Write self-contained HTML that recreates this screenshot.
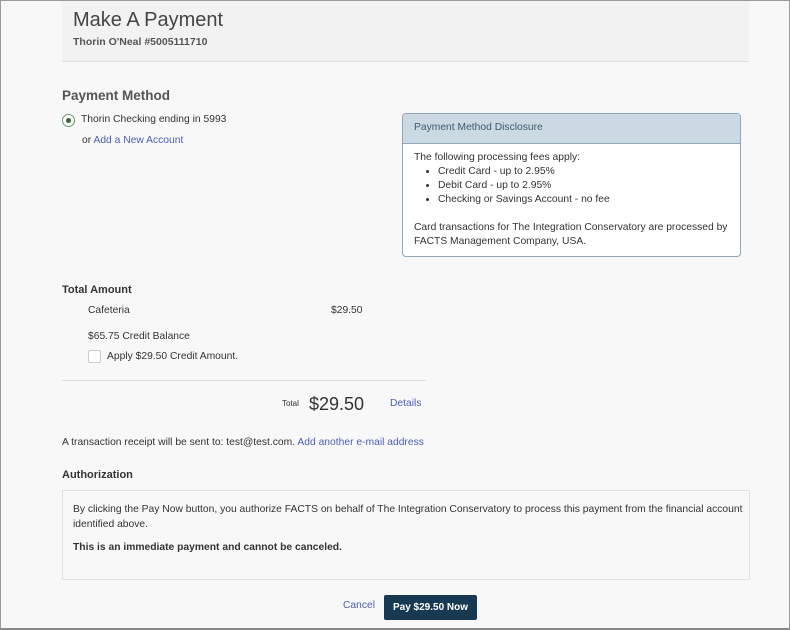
<!DOCTYPE html>
<html><head><style>
*{margin:0;padding:0;box-sizing:border-box}
body{width:790px;height:630px;background:#f8f8f8;font-family:"Liberation Sans",sans-serif;color:#333;position:relative;overflow:hidden;font-size:10.3px}
.frame{position:absolute;inset:0;border:1px solid #9a9a9a;border-bottom:2px solid #8a8a8a;pointer-events:none}
.a{position:absolute;white-space:nowrap}
a,.l{color:#4a5fb5;text-decoration:none}
</style></head><body>
<div class="a" style="left:62px;top:0;width:687px;height:62px;background:#f2f2f2;border-bottom:1px solid #e0e0e0"></div>
<div class="a" style="left:73px;top:9px;font-size:20px;color:#444">Make A Payment</div>
<div class="a" style="left:73px;top:36px;font-size:10.5px;font-weight:bold;color:#555">Thorin O'Neal #5005111710</div>

<div class="a" style="left:62px;top:88px;font-size:13.5px;font-weight:bold;color:#555">Payment Method</div>
<div class="a" style="left:62px;top:114px;width:13px;height:13px;border:1px solid #6a9a6a;border-radius:50%;background:#fff"></div>
<div class="a" style="left:66px;top:118px;width:5px;height:5px;border-radius:50%;background:#2d6a2d"></div>
<div class="a" style="left:81px;top:114px">Thorin Checking ending in 5993</div>
<div class="a" style="left:82px;top:135px">or <span class="l">Add a New Account</span></div>

<div class="a" style="left:402px;top:113px;width:339px;height:144px;border:1px solid #8fa6b8;border-radius:4px;background:#fff;overflow:hidden">
<div style="height:30px;background:#cbd9e3;border-bottom:1px solid #8fa6b8;padding:8px 0 0 11px;color:#3e5a6e">Payment Method Disclosure</div>
<div style="padding:7px 0 0 11px;line-height:14px">The following processing fees apply:
<ul style="margin-left:24px;list-style:disc">
<li>Credit Card - up to 2.95%</li><li>Debit Card - up to 2.95%</li><li>Checking or Savings Account - no fee</li></ul>
<div style="margin-top:14px">Card transactions for The Integration Conservatory are processed by<br>FACTS Management Company, USA.</div>
</div></div>

<div class="a" style="left:62px;top:284px;font-weight:bold;font-size:11px">Total Amount</div>
<div class="a" style="left:88px;top:305px">Cafeteria</div>
<div class="a" style="left:331px;top:305px">$29.50</div>
<div class="a" style="left:88px;top:331px">$65.75 Credit Balance</div>
<div class="a" style="left:88px;top:350px;width:13px;height:13px;border:1px solid #ccc;background:#fff;border-radius:2px"></div>
<div class="a" style="left:107px;top:351px">Apply $29.50 Credit Amount.</div>
<div class="a" style="left:62px;top:380px;width:364px;height:1px;background:#ddd"></div>
<div class="a" style="left:282px;top:399px;font-size:8px">Total</div>
<div class="a" style="left:309px;top:394px;font-size:18px">$29.50</div>
<div class="a l" style="left:390px;top:398px">Details</div>
<div class="a" style="left:62px;top:437px">A transaction receipt will be sent to: test@test.com. <span class="l">Add another e-mail address</span></div>

<div class="a" style="left:62px;top:469px;font-weight:bold;font-size:11px">Authorization</div>
<div class="a" style="left:62px;top:490px;width:688px;height:90px;border:1px solid #e2e2e2"></div>
<div class="a" style="left:73px;top:502px;font-size:10.3px;line-height:15px">By clicking the Pay Now button, you authorize FACTS on behalf of The Integration Conservatory to process this payment from the financial account<br>identified above.</div>
<div class="a" style="left:73px;top:542px;font-size:10.3px;font-weight:bold">This is an immediate payment and cannot be canceled.</div>

<div class="a l" style="left:343px;top:600px">Cancel</div>
<div class="a" style="left:384px;top:595px;width:93px;height:25px;background:#173a52;border-radius:2px;color:#fff;font-weight:bold;font-size:10px;text-align:center;line-height:25px">Pay $29.50 Now</div>
<div class="frame"></div>
</body></html>
